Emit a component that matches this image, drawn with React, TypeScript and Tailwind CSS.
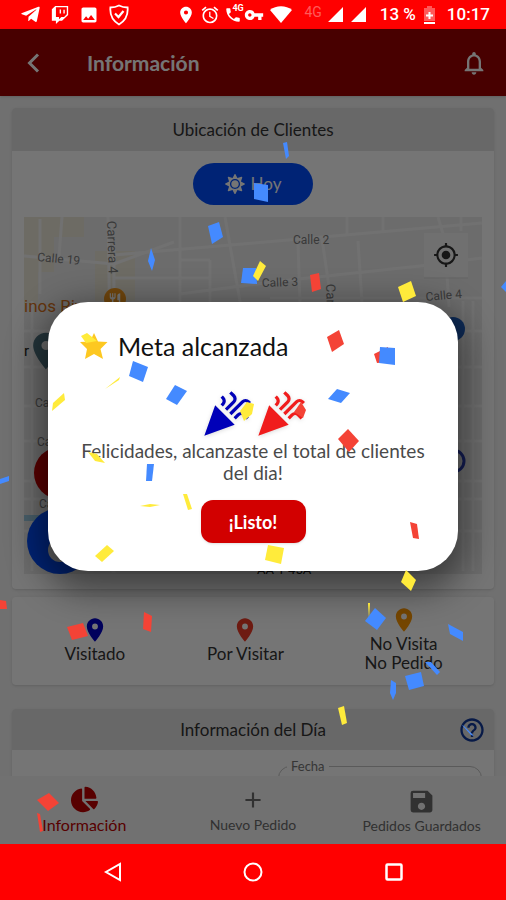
import { useState } from "react";
import { FaChartPie, FaSun, FaTelegramPlane, FaTwitch } from "react-icons/fa";
import {
  MdAdd,
  MdAlarm,
  MdCelebration,
  MdHelpOutline,
  MdImage,
  MdLocalPhone,
  MdLocationOn,
  MdMyLocation,
  MdNotificationsNone,
  MdRestaurant,
  MdSave,
  MdVpnKey,
} from "react-icons/md";

const BLUE = "#448aff";
const YELLOW = "#ffeb3b";
const RED = "#f44336";

// Confetti pieces, one polygon each
const CONFETTI = [
  { color: BLUE, points: "208,226 219,222 223,237 212,244" },
  { color: BLUE, points: "148,261 151,248 155,260 152,271" },
  { color: BLUE, points: "243,268 256,268 257,284 241,283" },
  { color: YELLOW, points: "253,276 260,261 266,266 258,281" },
  { color: BLUE, points: "283,143 287,142 289,156 286,159" },
  { color: BLUE, points: "254,183 268,185 268,202 254,199" },
  { color: RED, points: "310,275 319,273 321,289 312,292" },
  { color: YELLOW, points: "398,287 411,281 416,296 403,302" },
  { color: BLUE, points: "501,287 506,281 506,292" },
  { color: BLUE, points: "133,361 148,367 143,382 129,376" },
  { color: BLUE, points: "175,385 187,391 177,405 166,399" },
  { color: YELLOW, points: "53,403 64,393 65,400 52,411" },
  { color: YELLOW, points: "105,389 120,377 119,380" },
  { color: YELLOW, points: "81,336 87,333 97,341 86,343" },
  { color: YELLOW, points: "240,411 247,402 254,404 252,414 244,421" },
  { color: RED, points: "327,337 339,330 344,344 332,352" },
  { color: RED, points: "374,354 388,347 388,362 377,363" },
  { color: BLUE, points: "380,347 395,348 395,365 379,363" },
  { color: BLUE, points: "328,399 337,389 350,393 341,403" },
  { color: RED, points: "348,429 359,441 349,452 338,439" },
  { color: RED, points: "294,412 301,402 306,410 303,418" },
  { color: YELLOW, points: "88,452 97,454 105,463 95,461" },
  { color: BLUE, points: "147,464 154,464 152,481 146,481" },
  { color: YELLOW, points: "140,506 150,504 160,505 150,507" },
  { color: YELLOW, points: "183,494 187,494 192,509 188,510" },
  { color: YELLOW, points: "95,556 107,545 114,551 102,562" },
  { color: BLUE, points: "0,479 9,476 9,481 0,484" },
  { color: RED, points: "410,522 417,524 419,539 413,538" },
  { color: YELLOW, points: "268,545 284,548 281,564 265,560" },
  { color: YELLOW, points: "406,570 416,580 411,591 401,582" },
  { color: RED, points: "0,600 6,601 7,609 0,609" },
  { color: RED, points: "67,627 83,623 88,636 72,640" },
  { color: RED, points: "144,612 152,616 151,632 143,629" },
  { color: YELLOW, points: "368,603 370,603 369,619" },
  { color: BLUE, points: "375,608 386,618 377,630 365,621" },
  { color: BLUE, points: "448,624 463,632 463,641 450,634" },
  { color: BLUE, points: "425,662 431,662 440,672 437,675" },
  { color: BLUE, points: "405,676 421,672 424,686 409,690" },
  { color: BLUE, points: "391,680 396,683 396,693 393,700 390,693" },
  { color: YELLOW, points: "338,708 344,706 347,723 342,725" },
  { color: BLUE, points: "462,725 464,726 474,736 471,735" },
  { color: RED, points: "37,800 49,793 59,803 48,811" },
  { color: RED, points: "37,813 40,814 43,831 40,832" },
];

const StatusBar = () => (
  <div className="flex h-[29px] shrink-0 items-center justify-between bg-[#ff0000] pr-4 pl-5 font-[Roboto,sans-serif] text-white">
    <div className="flex items-center gap-2.5">
      <FaTelegramPlane size={21} />
      <FaTwitch size={18} />
      <MdImage size={20} />
      <svg width="20" height="22" viewBox="0 0 20 22" fill="none" stroke="currentColor">
        <path d="M10 1.5c3 1.6 6 2 8.6 2 .6 7-1.600 13-8.600 17C3 16.500.800 10.500 1.400 3.500c2.600 0 5.600-.4 8.600-2z" strokeWidth="1.800" />
        <path d="M6 9.500l3.500 3.500 5-6" strokeWidth="2.200" />
      </svg>
    </div>
    <div className="flex items-center">
      <MdLocationOn size={20} />
      <MdAlarm size={20} className="ml-1" />
      <span className="relative ml-1 flex w-5">
        <MdLocalPhone size={18} />
        <span className="absolute -top-1 left-2 text-[9px] leading-3 font-bold">4G</span>
      </span>
      <MdVpnKey size={20} />
      <svg className="ml-1.5" width="22" height="17" viewBox="0 0 22 17" fill="currentColor">
        <path d="M0 4C6-1 16-1 22 4L11 17z" />
      </svg>
      <span className="ml-3 self-start text-sm leading-5 text-[#ff5a5a]">4G</span>
      <svg className="ml-1.5" width="38" height="15" viewBox="0 0 38 15" fill="currentColor">
        <path d="M0 15L15 0v15zM23 15L38 0v15z" />
      </svg>
      <span className="ml-3.5 text-[17px] font-medium">13 %</span>
      <svg className="ml-2" width="11" height="18" viewBox="0 0 11 18" fill="currentColor">
        <path d="M3 0h5v2h3v13H0V2h3z" opacity=".35" />
        <path d="M0 16h11v2H0zM4.500 6h2v2.500H9v2H6.500V13h-2v-2.500H2v-2h2.500z" />
      </svg>
      <span className="ml-3 text-[17px] font-medium">10:17</span>
    </div>
  </div>
);

const StreetMap = () => (
  <svg className="h-[360px] w-full" viewBox="24 216 458 360" preserveAspectRatio="xMidYMin slice">
    <rect x="24" y="216" width="458" height="357" fill="#ebebeb" />
    <g fill="#eeeadb">
      <path d="M24 216h60v20H54v35H38v32H24zM95 250h40v50H95z" />
    </g>
    <g fill="none" stroke="#f6f6f6" strokeWidth="3">
      <path d="M40 218v75M62 216l-3 40M108 216l6 356M24 255l90 8 60-22M114 254l140-12 228-20M114 277h95M180 216v90M210 259v42M180 259h30M225 216l16 90M180 293l100-13 140-15 62-8" />
      <path d="M347 216v18M383 216v16M298 242l2 60M322 238l10 68M358 240l4 62M438 216l6 20M461 216v14M445 240l4 66M270 297h212M114 248l-1 324" />
      <path d="M24 330h458M24 366h458M24 405h458M24 440h458M24 480h458M24 498h458M24 530h458M463 300v270M473 300v270M32 300v270" />
    </g>
    <path d="M24 514h30v6H24z" fill="#9fd0e8" />
    <g fill="#7d7d7d" fontFamily="Roboto, sans-serif" fontSize="12">
      <text x="37" y="260" transform="rotate(5 37 260)">Calle 19</text>
      <text x="107" y="220" transform="rotate(88 107 220)" fontSize="13">Carrera 4</text>
      <text x="293" y="243">Calle 2</text>
      <text x="262" y="286" transform="rotate(-2 262 286)">Calle 3</text>
      <text x="426" y="300" transform="rotate(-5 426 300)">Calle 4</text>
      <text x="326" y="283" transform="rotate(88 326 283)" fontSize="13">Carrera 2</text>
      <text x="35" y="406">Calle 18</text>
      <text x="37" y="445">Calle 17</text>
      <text x="39" y="507">Calle 16</text>
      <text x="24" y="355" fill="#222" fontSize="15">r</text>
      <text x="257" y="573" fill="#111" fontSize="13">AA 1-45A</text>
    </g>
    <text x="24" y="311" fill="#d9741c" fontFamily="Roboto, sans-serif" fontSize="17">inos Rivera</text>
    <circle cx="115" cy="298" r="11" fill="#f59a1e" />
    <MdRestaurant x="108" y="291" size={14} color="#fff" />
    <MdLocationOn x="24" y="328" size={44} color="#4f7480" />
    <circle cx="453" cy="328" r="12" fill="#1f5fc0" />
    <circle cx="453" cy="460" r="11" fill="none" stroke="#2a3fb8" strokeWidth="3" />
    <circle cx="60" cy="472" r="26" fill="#c40000" />
    <circle cx="60" cy="540" r="33" fill="#004eff" />
    <circle cx="60" cy="549" r="12" fill="#ddd" />
    <rect x="424" y="232" width="44" height="44" fill="#f4f4f4" />
    <path d="M424 277h44" stroke="#dcdcdc" strokeWidth="1" />
    <MdMyLocation x="433" y="241" size={26} color="#333" />
  </svg>
);

const TabBar = () => (
  <nav className="grid h-[68px] shrink-0 grid-cols-3 bg-[#f6f6f6] text-[#6c6c6c]">
    <button className="flex flex-col items-center justify-center gap-0.5 text-base leading-5 text-[#c00000]">
      <FaChartPie size={27} />
      Información
    </button>
    <button className="flex flex-col items-center justify-center gap-0.5 pt-0.5 text-sm leading-5">
      <MdAdd size={26} />
      Nuevo Pedido
    </button>
    <button className="flex flex-col items-center justify-center pt-0.5 text-sm leading-5">
      <MdSave size={29} />
      Pedidos Guardados
    </button>
  </nav>
);

const GoalDialog = ({ onClose }: { onClose: () => void }) => (
  <div
    role="dialog"
    aria-labelledby="goal-title"
    className="relative mx-12 w-full max-w-[411px] rounded-[40px] bg-white px-7 pt-7 pb-7 shadow-[0_12px_34px_8px_rgba(0,0,0,0.45)]"
  >
    <div className="flex items-center gap-2.5 pl-1">
      <svg width="28" height="28" viewBox="0 0 28 28">
        <path
          d="M14 1l4 8.500 9.500.500-7 7 2.500 10-9-5-9 5 2-10-7-7 10-.500z"
          fill="#fdc821"
        />
      </svg>
      <h2 id="goal-title" className="text-[25px] leading-8 text-[#111]">
        Meta alcanzada
      </h2>
    </div>
    <div className="mt-[26px] flex justify-center gap-0.5">
      <MdCelebration size={52} color="#0000b8" className="drop-shadow-sm" />
      <MdCelebration size={52} color="#f01c1c" className="drop-shadow-sm" />
    </div>
    <p className="text-center text-[19px] leading-[22px] text-[#4a4a4a]">
      Felicidades, alcanzaste el total de clientes del dia!
    </p>
    <div className="mt-4 flex justify-center">
      <button
        onClick={onClose}
        className="h-[43px] w-[105px] rounded-xl bg-[#d20000] text-lg font-bold text-white shadow"
      >
        ¡Listo!
      </button>
    </div>
  </div>
);

const App = () => {
  const [open, setOpen] = useState(true);

  return (
    <div className="relative flex h-screen flex-col overflow-hidden font-[Lato,sans-serif]">
      <StatusBar />

      <div className="relative flex min-h-0 flex-1 flex-col bg-[#f3f3f3]">
        <header className="flex h-[67px] shrink-0 items-center bg-[#9d0000] pr-[18px] pl-[22px] text-white shadow">
          <button aria-label="Volver">
            <svg width="23" height="24" viewBox="0 0 23 24" fill="none" stroke="currentColor" strokeWidth="3">
              <path d="M16 3.500L7.500 12l8.500 8.500" />
            </svg>
          </button>
          <h1 className="ml-[42px] flex-1 text-[21px] font-bold">Información</h1>
          <button aria-label="Notificaciones">
            <MdNotificationsNone size={28} />
          </button>
        </header>

        <main className="min-h-0 flex-1 overflow-hidden px-3 pt-3 text-[#333]">
          <section className="rounded bg-white shadow">
            <h2 className="rounded-t bg-[#e2e2e2] text-center text-[17px] leading-[43px]">
              Ubicación de Clientes
            </h2>
            <div className="px-3 pt-3 pb-3">
              <button className="mx-auto mb-3 flex h-[42px] w-[120px] items-center justify-center gap-1.5 rounded-full bg-[#004eff] text-[17px] text-white">
                <FaSun size={20} />
                Hoy
              </button>
              <StreetMap />
            </div>
          </section>

          <section className="mt-2 grid h-[88px] grid-cols-[11fr_9fr_12fr] items-center rounded bg-white pb-1 text-center text-[17px] leading-[19px] shadow">
            <div className="flex flex-col items-center">
              <MdLocationOn size={28} color="#0000c8" />
              Visitado
            </div>
            <div className="flex flex-col items-center">
              <MdLocationOn size={28} color="#f03c28" />
              Por Visitar
            </div>
            <div className="flex flex-col items-center">
              <MdLocationOn size={28} color="#ff9800" />
              <span>No Visita</span>
              <span>No Pedido</span>
            </div>
          </section>

          <section className="mt-6 rounded bg-white shadow">
            <div className="relative flex h-[41px] items-center justify-center rounded-t bg-[#e2e2e2]">
              <h2 className="text-[17px]">Información del Día</h2>
              <button aria-label="Ayuda" className="absolute right-2">
                <MdHelpOutline size={28} color="#123a9c" />
              </button>
            </div>
            <div className="flex justify-end px-3 pt-1.5">
              <fieldset className="w-[204px] rounded-xl border border-[#c4c4c4] px-2">
                <legend className="px-1 text-[13px] leading-5 text-[#777]">
                  <label htmlFor="fecha">Fecha</label>
                </legend>
                <input id="fecha" type="text" className="h-10 w-full" />
              </fieldset>
            </div>
          </section>
        </main>

        <TabBar />

        {open && (
          <div className="absolute inset-0 flex items-center justify-center bg-black/54">
            <GoalDialog onClose={() => setOpen(false)} />
          </div>
        )}
      </div>

      <div className="grid h-14 shrink-0 grid-cols-[113px_1fr_113px] bg-[#ff0000] text-white">
        <button aria-label="Atrás" className="flex items-center justify-end">
          <svg className="-mr-2.5" width="20" height="20" viewBox="0 0 20 20" fill="none" stroke="currentColor" strokeWidth="2">
            <path d="M17 2v16L3 10z" />
          </svg>
        </button>
        <button aria-label="Inicio" className="flex items-center justify-center">
          <svg width="20" height="20" viewBox="0 0 20 20" fill="none" stroke="currentColor" strokeWidth="2">
            <circle cx="10" cy="10" r="8.500" />
          </svg>
        </button>
        <button aria-label="Recientes" className="flex items-center">
          <svg className="-ml-2" width="18" height="18" viewBox="0 0 18 18" fill="none" stroke="currentColor" strokeWidth="2.500">
            <rect x="1.500" y="1.500" width="15" height="15" rx="1" />
          </svg>
        </button>
      </div>

      {open && (
        <svg
          className="pointer-events-none absolute inset-0 h-full w-full"
          viewBox="0 0 506 900"
          preserveAspectRatio="xMidYMid slice"
        >
          {CONFETTI.map(({ color, points }) => (
            <polygon key={points} fill={color} points={points} />
          ))}
        </svg>
      )}
    </div>
  );
};

export default App;
